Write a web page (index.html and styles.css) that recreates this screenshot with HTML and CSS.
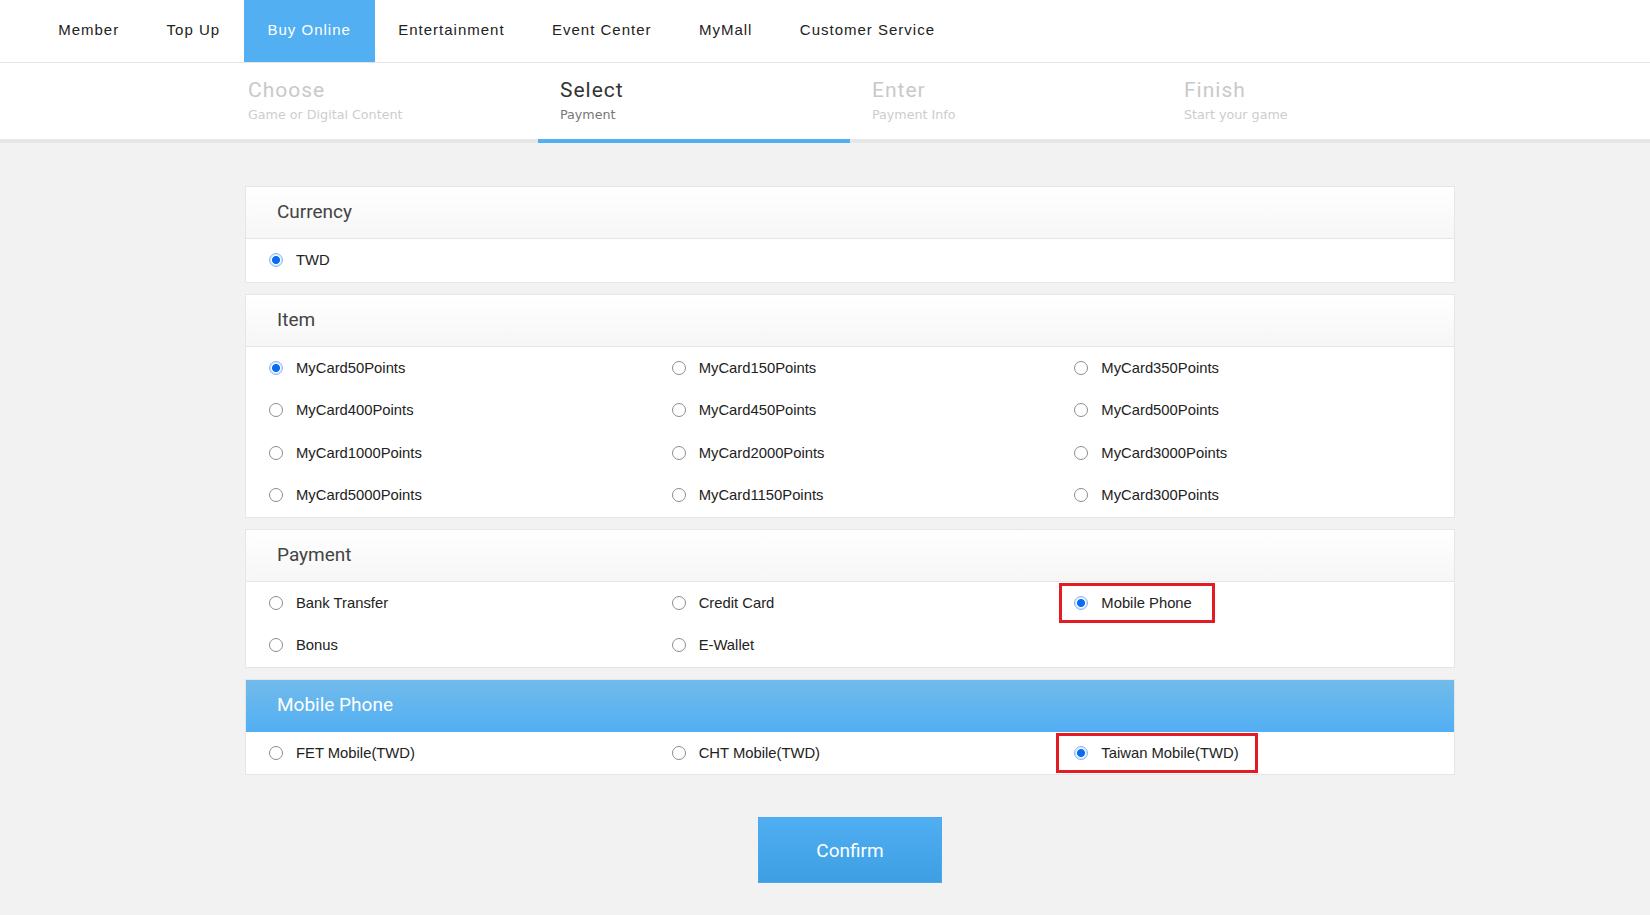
FILE: index.html
```html
<!DOCTYPE html>
<html lang="en">
<head>
<meta charset="utf-8">
<title>Buy Online - Select Payment</title>
<link rel="stylesheet" href="styles.css">
</head>
<body>
<nav class="topnav">
  <a class="nav-item">Member</a>
  <a class="nav-item">Top Up</a>
  <a class="nav-item active">Buy Online</a>
  <a class="nav-item">Entertainment</a>
  <a class="nav-item">Event Center</a>
  <a class="nav-item">MyMall</a>
  <a class="nav-item">Customer Service</a>
</nav>

<div class="steps">
  <div class="steps-inner">
    <div class="step">
      <div class="step-title">Choose</div>
      <div class="step-sub">Game or Digital Content</div>
    </div>
    <div class="step active">
      <div class="step-title">Select</div>
      <div class="step-sub">Payment</div>
    </div>
    <div class="step">
      <div class="step-title">Enter</div>
      <div class="step-sub">Payment Info</div>
    </div>
    <div class="step">
      <div class="step-title">Finish</div>
      <div class="step-sub">Start your game</div>
    </div>
  </div>
</div>

<main class="main">
  <section class="card">
    <div class="card-head">Currency</div>
    <div class="card-body">
      <label class="opt"><input class="radio" type="radio" name="cur" checked><span>TWD</span></label>
    </div>
  </section>

  <section class="card">
    <div class="card-head">Item</div>
    <div class="card-body">
      <label class="opt"><input class="radio" type="radio" name="item" checked><span>MyCard50Points</span></label>
      <label class="opt"><input class="radio" type="radio" name="item"><span>MyCard150Points</span></label>
      <label class="opt"><input class="radio" type="radio" name="item"><span>MyCard350Points</span></label>
      <label class="opt"><input class="radio" type="radio" name="item"><span>MyCard400Points</span></label>
      <label class="opt"><input class="radio" type="radio" name="item"><span>MyCard450Points</span></label>
      <label class="opt"><input class="radio" type="radio" name="item"><span>MyCard500Points</span></label>
      <label class="opt"><input class="radio" type="radio" name="item"><span>MyCard1000Points</span></label>
      <label class="opt"><input class="radio" type="radio" name="item"><span>MyCard2000Points</span></label>
      <label class="opt"><input class="radio" type="radio" name="item"><span>MyCard3000Points</span></label>
      <label class="opt"><input class="radio" type="radio" name="item"><span>MyCard5000Points</span></label>
      <label class="opt"><input class="radio" type="radio" name="item"><span>MyCard1150Points</span></label>
      <label class="opt"><input class="radio" type="radio" name="item"><span>MyCard300Points</span></label>
    </div>
  </section>

  <section class="card">
    <div class="card-head">Payment</div>
    <div class="card-body">
      <label class="opt"><input class="radio" type="radio" name="pay"><span>Bank Transfer</span></label>
      <label class="opt"><input class="radio" type="radio" name="pay"><span>Credit Card</span></label>
      <label class="opt"><span class="mark mark-pay"><input class="radio" type="radio" name="pay" checked><span>Mobile Phone</span></span></label>
      <label class="opt"><input class="radio" type="radio" name="pay"><span>Bonus</span></label>
      <label class="opt"><input class="radio" type="radio" name="pay"><span>E-Wallet</span></label>
    </div>
  </section>

  <section class="card">
    <div class="card-head blue">Mobile Phone</div>
    <div class="card-body">
      <label class="opt"><input class="radio" type="radio" name="mob"><span>FET Mobile(TWD)</span></label>
      <label class="opt"><input class="radio" type="radio" name="mob"><span>CHT Mobile(TWD)</span></label>
      <label class="opt"><span class="mark mark-mob"><input class="radio" type="radio" name="mob" checked><span>Taiwan Mobile(TWD)</span></span></label>
    </div>
  </section>

  <div class="actions">
    <button class="confirm" type="button">Confirm</button>
  </div>
</main>
</body>
</html>
```

FILE: styles.css
```css
* { box-sizing: border-box; }

html, body {
  margin: 0;
  padding: 0;
}

body {
  background: #f2f2f2;
  font-family: "Liberation Sans", Arial, sans-serif;
  color: #222;
  min-height: 915px;
}

/* top navigation */
.topnav {
  display: flex;
  height: 63px;
  padding-left: 34.5px;
  background: #fff;
  border-bottom: 1px solid #e6e6e6;
}

.nav-item {
  display: flex;
  align-items: center;
  padding: 0 23.7px 4px;
  height: 62px;
  font-size: 15px;
  letter-spacing: 1px;
  color: #222;
  cursor: pointer;
}

.nav-item.active {
  background: #52aff2;
  color: #fff;
}

/* steps */
.steps {
  background: #fff;
  border-bottom: 4px solid #e6e6e6;
  height: 80px;
}

.steps-inner {
  display: flex;
  margin-left: 226px;
}

.step {
  width: 312px;
  height: 80px;
  padding: 15px 0 0 22px;
  border-bottom: 4px solid transparent;
}

.step.active {
  border-bottom-color: #52aff2;
}

.step-title {
  font-family: Roboto, "Liberation Sans", sans-serif;
  font-size: 21px;
  line-height: 24px;
  letter-spacing: 1px;
  color: #c9c9c9;
}

.step-sub {
  margin-top: 5px;
  font-family: "DejaVu Sans", Verdana, sans-serif;
  font-size: 12.7px;
  line-height: 16px;
  color: #cdcdcd;
}

.step.active .step-title { color: #333; }
.step.active .step-sub { color: #777; }

/* main content */
.main {
  width: 1210px;
  margin-left: 245px;
  padding-top: 43px;
}

.card {
  background: #fff;
  border: 1px solid #e6e6e6;
  margin-bottom: 11px;
}

.card-head {
  height: 52px;
  display: flex;
  align-items: center;
  padding-left: 31px;
  padding-bottom: 2px;
  font-family: Roboto, "Liberation Sans", sans-serif;
  font-size: 19px;
  color: #444;
  background: linear-gradient(#ffffff, #f6f6f6);
  border-bottom: 1px solid #e6e6e6;
}

.card-head.blue {
  height: 52px;
  color: #fff;
  background: linear-gradient(#72bbeb, #52aff3);
  border-bottom: none;
}

.card-body {
  display: grid;
  grid-template-columns: repeat(3, 1fr);
}

.opt {
  display: flex;
  align-items: center;
  height: 42.5px;
  padding-left: 23px;
  font-size: 14.8px;
  color: #222;
}

.mark {
  position: relative;
  display: flex;
  align-items: center;
}

.mark::after {
  content: "";
  position: absolute;
  border: 3px solid #e31b23;
  pointer-events: none;
}

.mark-pay::after {
  left: -15px;
  right: -23px;
  top: -12px;
  bottom: -12px;
}

.mark-mob::after {
  left: -18px;
  right: -19px;
  top: -12px;
  bottom: -12px;
}

.radio {
  appearance: none;
  -webkit-appearance: none;
  width: 14px;
  height: 14px;
  margin: 0 13px 0 0;
  border: 1px solid #8d8d8d;
  border-radius: 50%;
  background: #fff;
  flex: none;
}

.radio:checked {
  border: 1px solid #86b8f3;
  background: radial-gradient(circle, #0a6cf5 0, #0a6cf5 3.6px, #ffffff 4.4px);
  box-shadow: inset 0 0 0 1px #cfe2fb;
}

/* confirm */
.actions {
  display: flex;
  justify-content: center;
  padding-top: 31px;
}

.confirm {
  width: 184px;
  height: 66px;
  border: 1px solid #4aa9ee;
  background: linear-gradient(#50aef2, #3e9fe3);
  color: #fff;
  font-family: Roboto, "Liberation Sans", sans-serif;
  font-size: 19px;
  cursor: pointer;
}
```
